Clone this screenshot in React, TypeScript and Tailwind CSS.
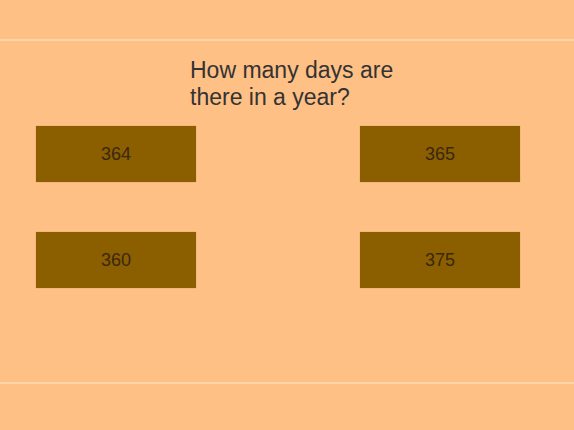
export default function App() {
  const answers = ['364', '365', '360', '375'];
  return (
    <div className="w-[574px] h-[430px] bg-[#ffc085] flex flex-col font-['Liberation_Sans',Arial,sans-serif]">
      <div className="h-[39px]" />
      <div className="h-[2px] bg-[#ffd2a8]" />
      <div className="flex-1 flex flex-col">
        <div className="pl-[190px] pt-[16px] text-[23px] leading-[27px] text-[#333333]">
          How many days are
          <br />
          there in a year?
        </div>
        <div className="grid grid-cols-[160px_160px] justify-between px-[36px] mt-[15px] mr-[18px] gap-y-[50px]">
          {answers.map((a) => (
            <button
              key={a}
              className="h-[56px] bg-[#8b5e00] text-[18px] text-[#3a2810] shadow-[0_0_1px_rgba(0,0,0,0.3)]"
            >
              {a}
            </button>
          ))}
        </div>
      </div>
      <div className="h-[2px] bg-[#ffd2a8]" />
      <div className="h-[46px]" />
    </div>
  );
}
